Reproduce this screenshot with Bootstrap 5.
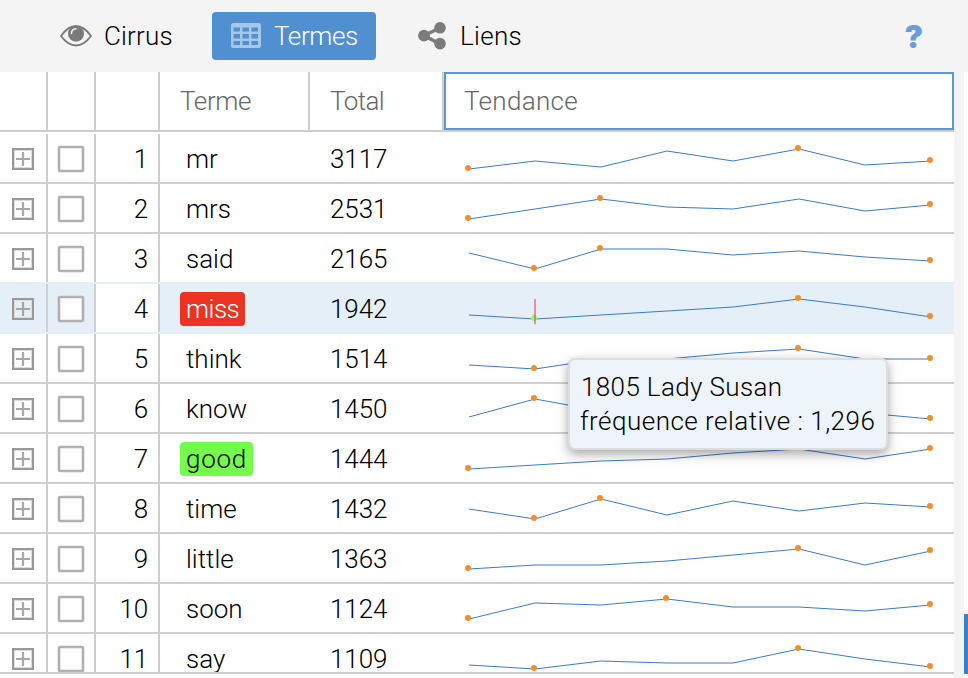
<!DOCTYPE html>
<html lang="fr">
<head>
<meta charset="utf-8">
<meta name="viewport" content="width=device-width, initial-scale=1">
<title>Termes</title>
<link href="https://cdn.jsdelivr.net/npm/bootstrap@5.3.0/dist/css/bootstrap.min.css" rel="stylesheet">
<style>
body{width:968px;height:678px;overflow:hidden;background:#f4f4f4;color:#000;font:300 26px/34px Roboto,"Liberation Sans",sans-serif}
.tabs-bar{height:72px;padding:12px 45px 12px 44px}
.tab-btn{height:48px;border-radius:4px;white-space:nowrap}
.tab-cirrus{width:168px;padding-left:16px}
.tab-termes{width:164px;padding-left:19px;background:#5190d0;color:#fff}
.tab-liens{padding-left:42px}
.tab-cirrus span{margin-left:12px;letter-spacing:.2px}
.tab-termes span{margin-left:13px;letter-spacing:-.4px}
.tab-liens span{margin-left:14px;letter-spacing:.3px}
.help-mark{font:900 31px/49px Inter,sans-serif;color:#6a9ed8}
.terms-panel{width:954px;height:606px;background:#fff}
.head-row{height:60px;border-bottom:2px solid #cecece;color:#666}
.head-row>div,.term-row>div{flex:none;border-right:2px solid #cecece}
.c-exp{width:48px}.c-chk{width:48px}.c-num{width:64px}.c-term{width:150px}.c-total{width:134px}.c-trend{width:510px}
.head-row>.c-trend{border:2px solid #5b98d3;padding-left:18px;letter-spacing:.3px}
.head-row>.c-term,.head-row>.c-total{padding-left:20px}
.head-row>.c-term{letter-spacing:-.4px}
.head-row>.c-total{letter-spacing:-.6px}
.rows-view{height:542px;padding-top:2px;border-bottom:2px solid #cecece;overflow:hidden}
.term-row{height:50px;border-bottom:2px solid #cecece}
.term-row>.c-term,.term-row>.c-total,.term-row>.c-trend{border-right:0}
.term-row>.c-num{padding:2px 10px 0 0;background:#fff;letter-spacing:-.2px}
.term-row>.c-term{padding:2px 0 0 20px}
.term-row>.c-total{padding:2px 0 0 20px;letter-spacing:-.1px}
.term-row.hovered{background:#e4eff8;border-color:#e4eff8;box-shadow:0 -2px #e4eff8}
.term-label{height:34px;padding:0 6px;border-radius:4px;line-height:35px}
.lbl-red{background:#ea3323;color:#fff;letter-spacing:-.5px}
.lbl-green{background:#75fb4c;letter-spacing:.7px}
svg{display:block}
.freq-tip{position:absolute;left:568px;top:358px;width:320px;height:92px;background:#edf4fa;border:2px solid #ddd;border-radius:7px;padding:10px 0 0 11px;box-shadow:0 4px 11px rgba(0,0,0,.36);white-space:nowrap}
.tip-a{letter-spacing:.37px}
.tip-b{letter-spacing:.48px;margin-left:-1px}
.side-strip{width:4px;height:606px;padding-top:538px;background:#fff}
.side-gap{height:4px;background:#f4f4f4}
.side-thumb{height:60px;background:#3f7fc8}
</style>
<script src="https://cdn.jsdelivr.net/npm/bootstrap@5.3.0/dist/js/bootstrap.bundle.min.js"></script>
</head>
<body class="position-relative">
<nav class="tabs-bar d-flex align-items-center">
  <div class="tab-btn tab-cirrus d-flex align-items-center">
    <svg width="32" height="22" viewBox="0 0 32 22"><path d="M1 11Q8 1 16 1T31 11Q24 20.500 16 20.500T1 11Z" fill="none" stroke="#7b7b7b" stroke-width="1.900"/><circle cx="16" cy="8.700" r="8" fill="#7b7b7b"/><path d="M11.500 8.500Q11.500 4 16 3.800" fill="none" stroke="#f4f4f4" stroke-width="1.500" stroke-linecap="round"/></svg>
    <span>Cirrus</span>
  </div>
  <div class="tab-btn tab-termes d-flex align-items-center">
    <svg width="30" height="28" viewBox="0 0 30 28"><rect y="1" width="30" height="25" rx="2.500" fill="#a8c8e8"/><path fill="#5190d0" d="M2.500 5.500H9v4H2.500zM11.500 5.500h6.500v4h-6.500zM20.500 5.500H27v4h-6.500zM2.500 12H9v4.500H2.500zM11.500 12h6.500v4.500h-6.500zM20.500 12H27v4.500h-6.500zM2.500 19H9v4H2.500zM11.500 19h6.500v4h-6.500zM20.500 19H27v4h-6.500z"/></svg>
    <span>Termes</span>
  </div>
  <div class="tab-btn tab-liens d-flex align-items-center">
    <svg width="28" height="28" viewBox="0 0 28 28"><path d="M22 6 6 13.500 22 22" fill="none" stroke="#7b7b7b" stroke-width="3.500"/><g fill="#7b7b7b"><circle cx="6" cy="13.600" r="5.900"/><circle cx="22" cy="5.800" r="5.800"/><circle cx="22" cy="21.600" r="5.800"/></g></svg>
    <span>Liens</span>
  </div>
  <span class="help-mark ms-auto">?</span>
</nav>
<div class="d-flex justify-content-between">
  <main class="terms-panel">
    <div class="head-row d-flex">
      <div class="c-exp"></div><div class="c-chk"></div><div class="c-num"></div>
      <div class="c-term d-flex align-items-center">Terme</div>
      <div class="c-total d-flex align-items-center">Total</div>
      <div class="c-trend d-flex align-items-center">Tendance</div>
    </div>
    <div class="rows-view" id="rows"></div>
  </main>
  <aside class="side-strip"><div class="side-gap"></div><div class="side-thumb"></div></aside>
</div>
<div class="freq-tip"><div class="tip-a">1805 Lady Susan</div><div class="tip-b">fréquence relative : 1,296</div></div>
<script>
// term, total, line heights inside the row, indices of the highlighted points
const terms=[
["mr",3117,[35,27,33,17,27,15,31,27],[0,5,7]],
["mrs",2531,[35,25,15,23,25,15,27,21],[0,2,7]],
["said",2165,[19,35,15,15,21,17,23,27],[1,2,7]],
["miss",1942,[31,35,31,27,23,15,23,33],[5,7],"lbl-red"],
["think",1514,[31,35,25,25,19,15,25,25],[1,5,7]],
["know",1450,[33,15,27,29,29,27,29,35],[1,7]],
["good",1444,[35,31,27,25,19,15,25,15],[0,7],"lbl-green"],
["time",1432,[25,35,15,31,17,27,19,23],[1,2,7]],
["little",1363,[35,31,31,27,21,15,31,17],[0,5,7]],
["soon",1124,[35,19,21,15,23,23,27,21],[0,3,7]],
["say",1109,[31,35,27,29,29,15,25,33],[1,5,7]]];
document.getElementById("rows").innerHTML=terms.map(([w,n,ys,dots,cls],i)=>{
  const hot=i===3;
  return `<div class="term-row d-flex${hot?" hovered":""}">
  <div class="c-exp d-flex align-items-center ps-2"><svg width="30" height="30" viewBox="0 0 30 30"><rect x="5" y="6" width="20" height="20" fill="none" stroke="#999" stroke-width="2"/><rect x="6.500" y="7.500" width="17" height="17" fill="none" stroke="#ddd"/><path d="M8 16h14M15 9v14" stroke="#a6a6a6" stroke-width="2.200"/></svg></div>
  <div class="c-chk d-flex align-items-center"><svg width="46" height="30" viewBox="0 0 46 30"><rect x="11" y="4" width="24" height="24" rx="1" fill="#fff" stroke="#b0b0b0" stroke-width="2.600"/></svg></div>
  <div class="c-num d-flex align-items-center justify-content-end">${i+1}</div>
  <div class="c-term d-flex align-items-center"><span class="term-label ${cls||""}">${w}</span></div>
  <div class="c-total d-flex align-items-center">${n}</div>
  <div class="c-trend"><svg width="510" height="48"><polyline points="${ys.map((y,k)=>(25+66*k)+","+y).join(" ")}" fill="none" stroke="#3a7bc8"/>${dots.map(k=>`<circle cx="${24+66*k}" cy="${ys[k]-1}" r="3" fill="#f28e2c"/>`).join("")}${hot?`<circle cx="90" cy="34" r="3" fill="#90ff60"/><path d="M91 15v25" stroke="#e82010" stroke-opacity=".45" stroke-width="2"/>`:""}</svg></div>
  </div>`;}).join("");
</script>
</body>
</html>
